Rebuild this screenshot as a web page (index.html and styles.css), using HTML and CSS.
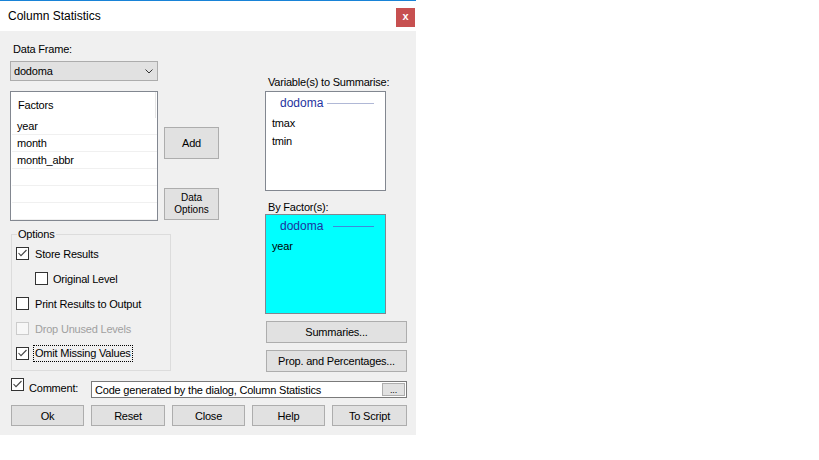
FILE: index.html
```html
<!DOCTYPE html>
<html>
<head>
<meta charset="utf-8">
<link rel="stylesheet" href="styles.css">
</head>
<body>
<div class="window">
  <div class="titlebar">
    <span class="title">Column Statistics</span>
    <div class="close">x</div>
  </div>
  <div class="main">
    <div class="leftpart">
      <div class="lbl df-lbl">Data Frame:</div>
      <div class="combo">
        <span>dodoma</span>
        <svg class="chev" width="8" height="5" viewBox="0 0 8 5"><polyline points="0.5,0.5 4,4 7.5,0.5" fill="none" stroke="#333" stroke-width="1"/></svg>
      </div>
      <div class="toprow">
        <div class="listview">
          <div class="lv-head"><span>Factors</span><span class="lv-div"></span></div>
          <div class="lv-row">year</div>
          <div class="lv-row">month</div>
          <div class="lv-row">month_abbr</div>
          <div class="lv-row"></div>
          <div class="lv-row"></div>
          <div class="lv-row"></div>
        </div>
        <div class="btncol">
          <div class="btn add">Add</div>
          <div class="btn dataopt">Data<br>Options</div>
        </div>
      </div>
      <div class="group">
        <div class="legend">Options</div>
        <div class="chk">
          <span class="box"><svg width="11" height="11" viewBox="0 0 11 11"><polyline points="1.5,5 4,7.7 9.5,2" fill="none" stroke="#444" stroke-width="1.1"/></svg></span>
          <span>Store Results</span>
        </div>
        <div class="chk indent">
          <span class="box"></span>
          <span>Original Level</span>
        </div>
        <div class="chk">
          <span class="box"></span>
          <span>Print Results to Output</span>
        </div>
        <div class="chk disabled">
          <span class="box"></span>
          <span>Drop Unused Levels</span>
        </div>
        <div class="chk">
          <span class="box"><svg width="11" height="11" viewBox="0 0 11 11"><polyline points="1.5,5 4,7.7 9.5,2" fill="none" stroke="#444" stroke-width="1.1"/></svg></span>
          <span class="focus">Omit Missing Values</span>
        </div>
      </div>
    </div>
    <div class="rightpart">
      <div class="lbl vars-lbl">Variable(s) to Summarise:</div>
      <div class="lbox">
        <div class="gh gh-vars"><span>dodoma</span></div>
        <div class="li">tmax</div>
        <div class="li">tmin</div>
      </div>
      <div class="lbl byf-lbl">By Factor(s):</div>
      <div class="lbox cyan">
        <div class="gh gh-byf"><span>dodoma</span></div>
        <div class="li">year</div>
      </div>
      <div class="btn wide summ">Summaries...</div>
      <div class="btn wide prop">Prop. and Percentages...</div>
    </div>
  </div>
  <div class="comment-row">
    <span class="box"><svg width="11" height="11" viewBox="0 0 11 11"><polyline points="1.5,5 4,7.7 9.5,2" fill="none" stroke="#444" stroke-width="1.1"/></svg></span>
    <span class="comment-lbl">Comment:</span>
    <div class="textbox">
      <span>Code generated by the dialog, Column Statistics</span>
      <div class="btn dots">...</div>
    </div>
  </div>
  <div class="btn-row">
    <div class="btn b-ok">Ok</div>
    <div class="btn b-reset">Reset</div>
    <div class="btn b-close">Close</div>
    <div class="btn b-help">Help</div>
    <div class="btn b-script">To Script</div>
  </div>
</div>
</body>
</html>
```
FILE: styles.css
```css
* { box-sizing: border-box; }
body {
  margin: 0;
  background: #fff;
  font-family: "Liberation Sans", Arial, sans-serif;
  font-size: 11px;
  color: #000;
}
.window {
  width: 416px;
  height: 435px;
  background: #f0f0f0;
  display: flex;
  flex-direction: column;
}
.titlebar {
  height: 31px;
  flex: none;
  background: #fff;
  border-top: 1px solid #1883d7;
  display: flex;
  justify-content: space-between;
  align-items: flex-start;
}
.title {
  font-size: 12px;
  line-height: 14px;
  margin: 8px 0 0 8px;
}
.close {
  width: 19px;
  height: 19px;
  margin: 7px 1px 0 0;
  background: #c75050;
  color: #fff;
  font-weight: bold;
  font-size: 11px;
  line-height: 17px;
  text-align: center;
}
.main, .comment-row, .btn-row { letter-spacing: -0.2px; }
.main {
  display: flex;
  padding-left: 10px;
  height: 341px;
  flex: none;
}
.leftpart {
  width: 208px;
  display: flex;
  flex-direction: column;
}
.lbl { line-height: 13px; }
.df-lbl { margin: 12px 0 0 3px; }
.combo {
  margin-top: 5px;
  width: 148px;
  height: 20px;
  border: 1px solid #acacac;
  background: #e1e1e1;
  display: flex;
  align-items: center;
  justify-content: space-between;
  padding: 0 4px 0 3px;
}
.chev { margin-top: 1px; }
.toprow {
  display: flex;
  margin-top: 10px;
}
.listview {
  width: 148px;
  height: 130px;
  flex: none;
  border: 1px solid #828790;
  background: #fff;
}
.lv-head {
  height: 26px;
  display: flex;
  align-items: center;
  padding-left: 7px;
}
.lv-div {
  margin-left: auto;
  margin-right: 1px;
  width: 1px;
  height: 26px;
  background: #e5e5e5;
}
.lv-row {
  height: 17px;
  margin-left: 1px;
  border-bottom: 1px solid #f0f0f0;
  padding-left: 5px;
  line-height: 16px;
}
.btncol {
  margin-left: 6px;
  display: flex;
  flex-direction: column;
}
.btn {
  background: #e1e1e1;
  border: 1px solid #adadad;
  display: flex;
  align-items: center;
  justify-content: center;
  text-align: center;
}
.add {
  width: 55px;
  height: 32px;
  margin-top: 36px;
}
.dataopt {
  width: 55px;
  height: 32px;
  margin-top: 29px;
  font-size: 10px;
  line-height: 12px;
  letter-spacing: 0;
}
.group {
  position: relative;
  margin: 13px 0 0 1px;
  width: 160px;
  height: 137px;
  border: 1px solid #dcdcdc;
  padding: 12px 0 0 4px;
  display: flex;
  flex-direction: column;
  gap: 12px;
}
.legend {
  position: absolute;
  top: -8px;
  left: 5px;
  padding: 0 1px;
  line-height: 14px;
  background: #f0f0f0;
}
.chk {
  display: flex;
  align-items: center;
  height: 13px;
  gap: 6px;
}
.chk.indent { margin-left: 19px; gap: 5px; }
.box {
  width: 13px;
  height: 13px;
  flex: none;
  border: 1px solid #333;
  background: #fff;
  display: flex;
}
.chk.disabled { color: #a0a0a0; }
.chk.disabled .box { border-color: #cccccc; background: #f7f7f7; }
.focus {
  outline: 1px dotted #000;
  outline-offset: 1px;
  line-height: 13px;
}
.rightpart {
  margin-left: 47px;
  width: 142px;
  display: flex;
  flex-direction: column;
}
.vars-lbl { margin: 45px 0 0 3px; }
.lbox {
  margin-top: 2px;
  width: 121px;
  height: 100px;
  border: 1px solid #828790;
  background: #fff;
}
.lbox.cyan { background: #00ffff; margin-top: 0; }
.byf-lbl { margin: 10px 0 0 3px; }
.gh {
  height: 22px;
  display: flex;
  align-items: center;
  padding-left: 14px;
  font-size: 12px;
  letter-spacing: 0;
  color: #1e32a0;
}
.gh::after {
  content: "";
  flex: 1;
  height: 1px;
  margin-right: 11px;
}
.gh-vars::after { margin-left: 4px; background: #b0b8d6; }
.gh-byf::after { margin-left: 10px; background: #3c8cdc; }
.li {
  height: 18px;
  line-height: 18px;
  padding-left: 6px;
}
.wide {
  margin-left: 1px;
  width: 141px;
  height: 22px;
  margin-top: 7px;
}
.comment-row {
  display: flex;
  align-items: flex-start;
  padding-left: 11px;
  margin-top: 6px;
  height: 20px;
  flex: none;
}
.comment-lbl {
  margin: 4px 0 0 5px;
  width: 62px;
  line-height: 13px;
}
.textbox {
  margin-top: 3px;
  width: 316px;
  height: 17px;
  border: 1px solid #7a7a7a;
  background: #fff;
  display: flex;
  align-items: center;
  justify-content: space-between;
  padding: 0 1px 0 3px;
}
.dots {
  width: 23px;
  height: 13px;
  font-size: 9px;
}
.btn-row {
  display: flex;
  gap: 7px;
  padding-left: 11px;
  margin-top: 7px;
  flex: none;
}
.btn-row .btn { height: 21px; width: 73px; }
.btn-row .b-reset { width: 74px; }
.btn-row .b-script { width: 75px; }
```
